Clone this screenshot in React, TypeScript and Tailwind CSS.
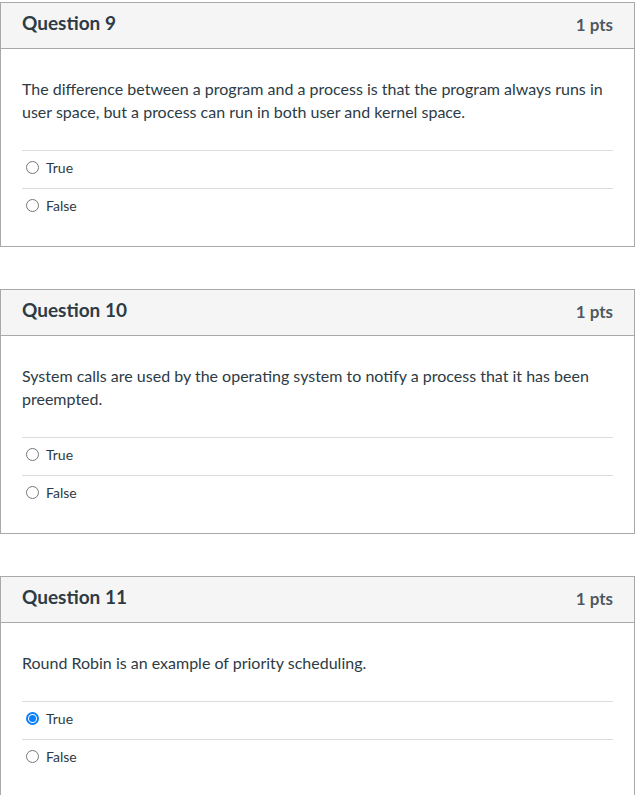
import React from 'react';

type Q = {
  n: number;
  text: string;
  selected?: 'True' | 'False';
};

const questions: Q[] = [
  {
    n: 9,
    text: 'The difference between a program and a process is that the program always runs in user space, but a process can run in both user and kernel space.',
  },
  {
    n: 10,
    text: 'System calls are used by the operating system to notify a process that it has been preempted.',
  },
  { n: 11, text: 'Round Robin is an example of priority scheduling.', selected: 'True' },
];

function Radio({ checked }: { checked: boolean }) {
  return checked ? (
    <span className="flex h-[13px] w-[13px] items-center justify-center rounded-full border-2 border-[#0b7ffb] bg-white">
      <span className="h-[7px] w-[7px] rounded-full bg-[#0b7ffb]" />
    </span>
  ) : (
    <span className="h-[13px] w-[13px] rounded-full border border-[#767676] bg-white" />
  );
}

function QuestionCard({ q }: { q: Q }) {
  return (
    <div className="w-[635px] border border-[#a9a9a9] bg-white">
      <div className="flex h-[46px] items-center justify-between border-b border-[#a9a9a9] bg-[#f5f5f5] pb-[4px] pl-[21px] pr-[21px]">
        <h2 className="text-[19px] font-bold text-[#2d3b45]">Question {q.n}</h2>
        <span className="pt-[2px] text-[17px] font-bold text-[#2d3b45]/85">1 pts</span>
      </div>
      <div className="px-[21px] pb-[20px] pt-[28px]">
        <p className="text-[16px] leading-[23px] text-[#2d3b45]">{q.text}</p>
        <div className="mt-[27px]">
          {(['True', 'False'] as const).map((a) => (
            <div key={a} className="flex h-[38px] items-center gap-[7px] border-t border-[#dcdcdc] pb-[5px] pl-[4px]">
              <Radio checked={q.selected === a} />
              <span className="text-[14px] text-[#2d3b45]">{a}</span>
            </div>
          ))}
        </div>
      </div>
    </div>
  );
}

export default function App() {
  return (
    <div className="flex min-h-screen flex-col gap-[42px] bg-white pt-[2px] font-['Lato','Noto_Sans',sans-serif]">
      {questions.map((q) => (
        <QuestionCard key={q.n} q={q} />
      ))}
    </div>
  );
}
